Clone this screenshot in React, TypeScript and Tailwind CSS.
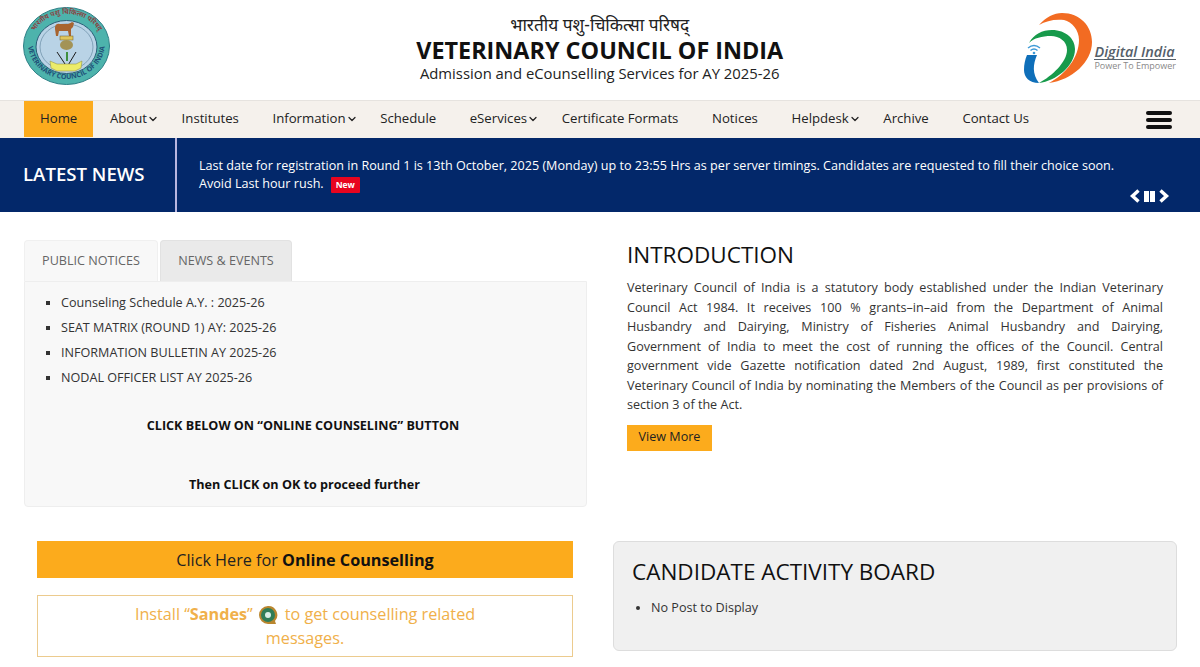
import { ChevronDown } from "lucide-react";

const navItems = [
  { label: "Home", active: true },
  { label: "About", caret: true },
  { label: "Institutes" },
  { label: "Information", caret: true },
  { label: "Schedule" },
  { label: "eServices", caret: true },
  { label: "Certificate Formats" },
  { label: "Notices" },
  { label: "Helpdesk", caret: true },
  { label: "Archive" },
  { label: "Contact Us" },
];

const notices = [
  "Counseling Schedule A.Y. : 2025-26",
  "SEAT MATRIX (ROUND 1) AY: 2025-26",
  "INFORMATION BULLETIN AY 2025-26",
  "NODAL OFFICER LIST AY 2025-26",
];

function CouncilLogo() {
  return (
    <svg width="88" height="79" viewBox="0 0 88 79" className="shrink-0">
      <defs>
        <path id="ring-top" d="M7 40 A36.5 33 0 0 1 80 40" />
        <path id="ring-bottom" d="M5 36 A38.5 36 0 0 0 82 36" />
      </defs>
      <ellipse cx="43.5" cy="39" rx="43" ry="38.5" fill="#4db3ac" stroke="#2e7f86" />
      <ellipse cx="43.5" cy="40" rx="30.5" ry="26.5" fill="#b9d3e6" stroke="#2b5f78" />
      <ellipse cx="43.5" cy="40" rx="26.5" ry="23" fill="none" stroke="#5a7f98" strokeWidth="0.6" />
      <text fontSize="7" fill="#8f3b3b" fontFamily="'Noto Sans', sans-serif" fontWeight="600">
        <textPath href="#ring-top" startOffset="50%" textAnchor="middle">भारतीय पशु चिकित्सा परिषद्</textPath>
      </text>
      <text fontSize="7" fill="#1f4f78" fontFamily="'Open Sans', sans-serif" fontWeight="700">
        <textPath href="#ring-bottom" startOffset="50%" textAnchor="middle">VETERINARY COUNCIL OF INDIA</textPath>
      </text>
      <path d="M32 20 q1 -4 5 -3 h8 q3 -1 4 -2 l2 1 -1 4 -2 2 v7 h-2 l-1 -5 h-9 l-1 5 h-2 l-1 -7z" fill="#a8642f" />
      <rect x="37" y="29" width="13" height="4" fill="#e0c65a" stroke="#6b5a2a" strokeWidth="0.5" />
      <ellipse cx="43.5" cy="38" rx="6.5" ry="5" fill="#a39356" />
      <path d="M34 45 L44 60 L53 45" fill="none" stroke="#1b1b1b" strokeWidth="1" />
      <path d="M44 45 v9" stroke="#3f8f3f" strokeWidth="2" />
      <path d="M27 54 l7 3 h19 l6 -3 -1 7 -6 3 h-18 l-6 -3z" fill="#ecec6a" stroke="#8a8a3a" strokeWidth="0.5" />
    </svg>
  );
}

function DigitalIndiaLogo() {
  return (
    <div className="flex items-end mt-[-3px]">
      <svg width="68" height="73" viewBox="0 0 68 73" className="shrink-0">
        <path d="M15 13 C22 5 30 1 38 1 C56 1 68 14 68 30 C68 50 48 68 25 71 C42 62 55 45 55 28 C55 18 48 10 40 8 C30 7 22 9 15 13Z" fill="#f26b22" />
        <path d="M5 31 C10 22 18 18 28 18 C42 18 51 27 51 37 C51 54 32 69 15 71 C28 64 43 50 43 38 C43 29 35 24 27 24 C18 24 10 26 5 31Z" fill="#179a4b" />
        <path d="M3 43 L13 43 C9 52 8 62 15 71 C5 71 0 65 0 58 C0 52 1 48 3 43Z" fill="#0f6fb9" />
        <path d="M4 36 q6 -5 12 0 M6.5 38.5 q3.5 -3 7 0" fill="none" stroke="#3d9ad6" strokeWidth="1.4" />
        <circle cx="10" cy="41" r="1.3" fill="#3d9ad6" />
      </svg>
      <div className="flex flex-col ml-[2px] mb-[14px] text-[#55606a]">
        <span className="text-[14.4px] italic font-semibold leading-[13px] pb-px border-b border-[#55606a] whitespace-nowrap">Digital India</span>
        <span className="text-[9px] leading-[11px] text-[#888] whitespace-nowrap">Power To Empower</span>
      </div>
    </div>
  );
}

function SandesIcon() {
  return (
    <svg width="20" height="20" viewBox="0 0 20 20" className="inline-block ml-[5px] mr-[7px] align-[-5px]">
      <path d="M10 1 a9 9 0 1 0 0 18 h8 l-1 -3 a9 9 0 0 0 -7 -15z" fill="#b9862e" />
      <circle cx="10" cy="10" r="7" fill="#2f7d58" />
      <circle cx="10" cy="10" r="3" fill="#d8efe6" />
    </svg>
  );
}

export default function App() {
  return (
    <div className="w-[1200px] h-[667px] overflow-hidden bg-white text-black font-['Open_Sans','Noto_Sans',sans-serif]">
      {/* header */}
      <header className="h-[100px] flex items-center justify-between pl-[23px] pr-[24px]">
        <div className="mt-[-7px]">
          <CouncilLogo />
        </div>
        <div className="flex flex-col items-center ml-[64px] mt-[-5px]">
          <p className="text-[17.3px] leading-[23px] font-['Noto_Sans','Liberation_Serif',serif] text-[#222]">भारतीय पशु-चिकित्सा परिषद्</p>
          <h1 className="text-[23.4px] leading-[28px] font-bold text-[#111]">VETERINARY COUNCIL OF INDIA</h1>
          <p className="text-[14.85px] leading-[19px] font-medium text-[#222]">Admission and eCounselling Services for AY 2025-26</p>
        </div>
        <DigitalIndiaLogo />
      </header>

      {/* nav */}
      <nav className="h-[38px] bg-[#f5f1ec] border-t border-[#e6e3df] flex pl-[24px] pr-[28px]">
        {navItems.map((item) => (
          <a
            key={item.label}
            className={`flex items-center text-[13.2px] font-medium whitespace-nowrap ${item.caret ? "pl-[16.8px] pr-[5.8px]" : item.active ? "pl-[16px] pr-[15.8px]" : "pl-[16.8px] pr-[16.8px]"} ${item.active ? "bg-[#fcab1c] text-[#222] mb-px pb-px" : "text-[#222] pb-[2px]"}`}
          >
            {item.label}
            {item.caret && <ChevronDown size={12} strokeWidth={2.5} />}
          </a>
        ))}
        <div className="ml-auto flex flex-col justify-center gap-[3px] w-[26px]">
          <span className="h-[4px] rounded-full bg-[#111]" />
          <span className="h-[4px] rounded-full bg-[#111]" />
          <span className="h-[4px] rounded-full bg-[#111]" />
        </div>
      </nav>

      {/* latest news */}
      <section className="h-[74px] bg-[#03286a] flex text-white">
        <div className="w-[175px] flex items-center pl-[23px] pb-[2px] text-[18.6px] font-semibold">LATEST NEWS</div>
        <div className="w-[2px] bg-[#b9b6e0]" />
        <div className="relative flex-1 pl-[22px] pt-[18px] text-[12.6px] font-medium leading-[18px]">
          <p className="pt-px">Last date for registration in Round 1 is 13th October, 2025 (Monday) up to 23:55 Hrs as per server timings. Candidates are requested to fill their choice soon.</p>
          <p>
            Avoid Last hour rush.
            <span className="inline-block ml-[7px] px-[5px] bg-[#e8051f] text-[8.5px] leading-[16px] font-bold rounded-[1px]">New</span>
          </p>
          <div className="absolute right-[30px] bottom-[9px] flex items-center gap-[3px]">
            <svg width="12" height="14" viewBox="0 0 12 14"><path d="M9.5 1.5 L3.5 7 L9.5 12.5" fill="none" stroke="#fff" strokeWidth="3.4" /></svg>
            <span className="w-[5px] h-[11px] bg-white" />
            <span className="w-[5px] h-[11px] bg-white ml-[-2px]" />
            <svg width="12" height="14" viewBox="0 0 12 14"><path d="M2.5 1.5 L8.5 7 L2.5 12.5" fill="none" stroke="#fff" strokeWidth="3.4" /></svg>
          </div>
        </div>
      </section>

      {/* content */}
      <main className="grid grid-cols-[587px_590px] pl-[23px] pt-[28px]">
        <div>
          <div className="flex pl-px">
            <div className="w-[134px] h-[41px] flex items-center justify-center bg-[#f8f8f8] rounded-t-[4px] text-[12.6px] text-[#666] border border-b-0 border-[#f0f0f0]">PUBLIC NOTICES</div>
            <div className="ml-[2px] w-[132px] h-[41px] flex items-center justify-center bg-[#eaeaea] rounded-t-[4px] text-[12.6px] text-[#666] border border-b-0 border-[#e2e2e2]">NEWS &amp; EVENTS</div>
          </div>
          <div className="ml-px w-[563px] h-[226px] bg-[#f8f8f8] border border-[#eeeeee] rounded-b-[4px] pt-[11px]">
            <ul className="list-[square] pl-[36px] text-[12.6px] leading-[20px] text-[#333] flex flex-col gap-[5px]">
              {notices.map((n) => (
                <li key={n}>{n}</li>
              ))}
            </ul>
            <p className="mt-[28px] pr-[5px] text-center text-[12.6px] font-bold text-[#111] leading-[20px]">CLICK BELOW ON “ONLINE COUNSELING” BUTTON</p>
            <p className="mt-[39px] pr-[2px] text-center text-[12.6px] font-bold text-[#111] leading-[20px]">Then CLICK on OK to proceed further</p>
          </div>
        </div>

        <div>
          <h2 className="text-[22.5px] leading-[30px] font-medium text-[#111] pl-[17px]">INTRODUCTION</h2>
          <p className="mt-[8px] ml-[17px] w-[536px] text-[12.6px] leading-[19.5px] text-[#333] text-justify">
            Veterinary Council of India is a statutory body established under the Indian Veterinary Council Act 1984. It receives 100 % grants–in–aid from the Department of Animal Husbandry and Dairying, Ministry of Fisheries Animal Husbandry and Dairying, Government&nbsp;of India to meet the cost of running the offices of the Council. Central government vide Gazette notification dated 2nd August, 1989, first constituted the Veterinary Council of India by nominating the Members of the Council as per provisions of section 3 of the Act.
          </p>
          <button className="block mt-[10px] ml-[17px] w-[85px] h-[26px] bg-[#fcab1c] text-[12.6px] text-[#222]">View More</button>
        </div>

        <div className="pt-[34px] pl-[14px]">
          <div className="w-[536px] h-[37px] pt-px flex items-center justify-center bg-[#fcab1c] text-[16.2px] text-[#222]">
            <span>Click Here for <b className="font-bold text-[#111]">Online Counselling</b></span>
          </div>
          <div className="mt-[17px] w-[536px] h-[62px] border border-[#eccb8e] text-center text-[16.2px] leading-[24px] text-[#f0b04a] px-[60px] pt-[6px]">
            Install “<b className="font-bold">Sandes</b>”<SandesIcon />to get counselling related messages.
          </div>
        </div>

        <div className="pt-[34px] pl-[3px]">
          <div className="w-[564px] h-[110px] bg-[#f0f0f0] border border-[#dddddd] rounded-[6px] pl-[18px] pt-[15px]">
            <h2 className="text-[22.5px] leading-[30px] font-medium text-[#111]">CANDIDATE ACTIVITY BOARD</h2>
            <ul className="list-disc pl-[19px] mt-[11px] text-[12.6px] leading-[20px] text-[#333]">
              <li>No Post to Display</li>
            </ul>
          </div>
        </div>
      </main>
    </div>
  );
}
